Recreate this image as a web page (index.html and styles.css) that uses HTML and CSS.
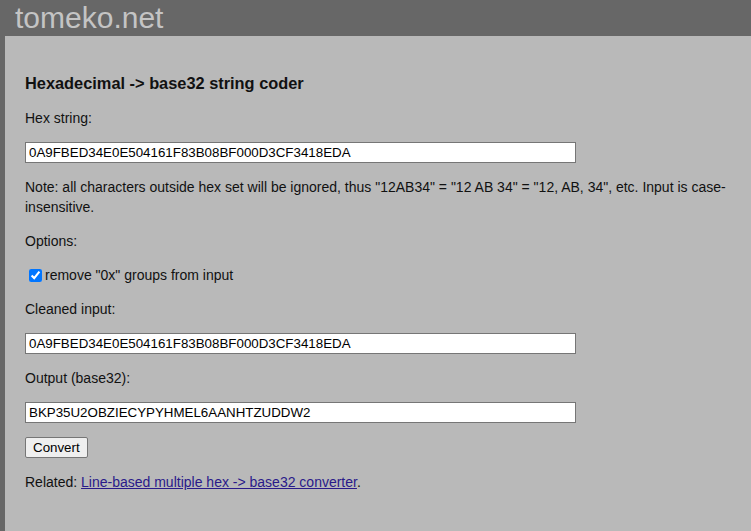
FILE: index.html
```html
<!DOCTYPE html>
<html>
<head>
<meta charset="utf-8">
<title>tomeko.net</title>
<link rel="stylesheet" href="styles.css">
</head>
<body>
<div class="header">tomeko.net</div>
<div class="panel">
  <h3 class="title">Hexadecimal -&gt; base32 string coder</h3>
  <p class="row">Hex string:</p>
  <input class="field" type="text" value="0A9FBED34E0E504161F83B08BF000D3CF3418EDA">
  <p class="row">Note: all characters outside hex set will be ignored, thus "12AB34" = "12 AB 34" = "12, AB, 34", etc. Input is case-insensitive.</p>
  <p class="row">Options:</p>
  <p class="row"><label><input class="check" type="checkbox" checked>remove "0x" groups from input</label></p>
  <p class="row">Cleaned input:</p>
  <input class="field" type="text" value="0A9FBED34E0E504161F83B08BF000D3CF3418EDA">
  <p class="row">Output (base32):</p>
  <input class="field" type="text" value="BKP35U2OBZIECYPYHMEL6AANHTZUDDW2">
  <div class="btnrow"><button class="btn" type="button">Convert</button></div>
  <p class="row">Related: <a class="link" href="#">Line-based multiple hex -&gt; base32 converter</a>.</p>
</div>
</body>
</html>
```
FILE: styles.css
```css
html, body {
  margin: 0;
  padding: 0;
}
body {
  background: #676767;
  font-family: "Liberation Sans", Arial, sans-serif;
  font-size: 14px;
  color: #111;
  min-height: 100vh;
  display: flex;
  flex-direction: column;
}
.header {
  height: 36px;
  line-height: 36px;
  font-size: 30px;
  color: #c4c4c4;
  padding-left: 15px;
}
.panel {
  flex: 1;
  margin-left: 5px;
  background: #b9b9b9;
  padding: 20px 20px 20px 20px;
  display: flex;
  flex-direction: column;
  align-items: flex-start;
}
.title {
  margin: 16px 0 0 0;
  font-size: 16.38px;
  line-height: 22px;
  font-weight: bold;
}
.row {
  margin: 14px 0 0 0;
  line-height: 20px;
}
.field {
  margin: 14px 0 0 0;
  box-sizing: border-box;
  width: 551px;
  height: 21px;
  border: 1px solid #767676;
  padding: 1px 3px;
  font-family: "Liberation Sans", Arial, sans-serif;
  font-size: 13.33px;
  color: #000;
  background: #fff;
}
.check {
  margin: 3px 3px 3px 4px;
  width: 13px;
  height: 13px;
  vertical-align: -2px;
}
.btnrow {
  margin-top: 14px;
}
.btn {
  box-sizing: border-box;
  height: 21px;
  padding: 0 7px;
  font-family: "Liberation Sans", Arial, sans-serif;
  font-size: 13.33px;
  color: #000;
  background: #efefef;
  border: 1px solid #767676;
  border-radius: 2px;
}
.link {
  color: #2a1a8a;
}
```
